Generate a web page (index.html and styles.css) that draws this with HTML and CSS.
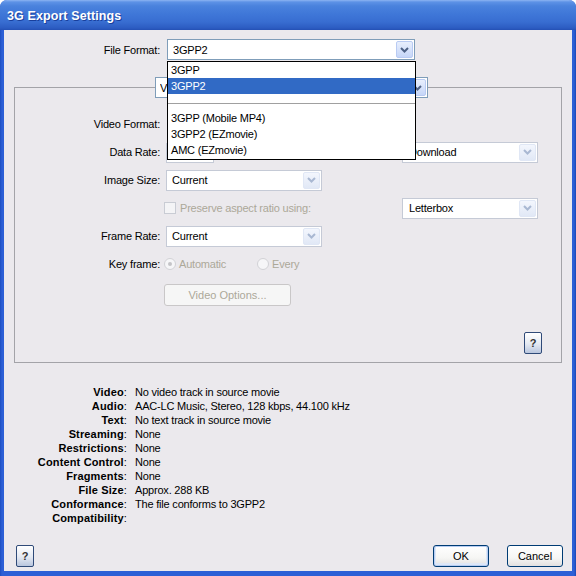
FILE: index.html
```html
<!DOCTYPE html>
<html>
<head>
<meta charset="utf-8">
<title>3G Export Settings</title>
<link rel="stylesheet" href="styles.css">
</head>
<body>
<div class="window">
  <div class="titlebar"><span class="title">3G Export Settings</span></div>
  <div class="client">
    <div class="ff-row">
      <span class="lbl">File Format:</span>
      <div class="combo ff"><span class="val">3GPP2</span><span class="btn"><svg width="9" height="6" viewBox="0 0 9 6"><path d="M1 1 L4.5 4.5 L8 1" fill="none" stroke="#4d6185" stroke-width="2"/></svg></span></div>
    </div>
    <fieldset class="group">
      <legend class="legend">
        <div class="combo tab"><span class="val">Video</span><span class="btn"><svg width="9" height="6" viewBox="0 0 9 6"><path d="M1 1 L4.5 4.5 L8 1" fill="none" stroke="#4d6185" stroke-width="2"/></svg></span></div>
      </legend>
      <div class="row">
        <span class="lbl">Video Format:</span>
        <div class="combo vf"><span class="val">H.263</span><span class="btn"></span></div>
      </div>
      <div class="row">
        <span class="lbl">Data Rate:</span>
        <div class="textbox"></div>
        <div class="combo dim side"><span class="val">Download</span><span class="btn"><svg width="9" height="6" viewBox="0 0 9 6"><path d="M1 1 L4.5 4.5 L8 1" fill="none" stroke="#a9b8d2" stroke-width="2"/></svg></span></div>
      </div>
      <div class="row">
        <span class="lbl">Image Size:</span>
        <div class="combo dim mid"><span class="val">Current</span><span class="btn"><svg width="9" height="6" viewBox="0 0 9 6"><path d="M1 1 L4.5 4.5 L8 1" fill="none" stroke="#a9b8d2" stroke-width="2"/></svg></span></div>
      </div>
      <div class="row">
        <span class="check"></span>
        <span class="disabled ctext">Preserve aspect ratio using:</span>
        <div class="combo dim side"><span class="val">Letterbox</span><span class="btn"><svg width="9" height="6" viewBox="0 0 9 6"><path d="M1 1 L4.5 4.5 L8 1" fill="none" stroke="#a9b8d2" stroke-width="2"/></svg></span></div>
      </div>
      <div class="row">
        <span class="lbl">Frame Rate:</span>
        <div class="combo dim mid"><span class="val">Current</span><span class="btn"><svg width="9" height="6" viewBox="0 0 9 6"><path d="M1 1 L4.5 4.5 L8 1" fill="none" stroke="#a9b8d2" stroke-width="2"/></svg></span></div>
      </div>
      <div class="row">
        <span class="lbl">Key frame:</span>
        <span class="radio on"></span><span class="disabled rtext">Automatic</span>
        <span class="radio second"></span><span class="disabled rtext">Every</span>
      </div>
      <div class="btnrow">
        <button class="pbtn off">Video Options...</button>
      </div>
      <div class="helprow">
        <button class="help">?</button>
      </div>
    </fieldset>
    <div class="info">
      <span class="k">Video<i>:</i></span><span>No video track in source movie</span>
      <span class="k">Audio<i>:</i></span><span>AAC-LC Music, Stereo, 128 kbps, 44.100 kHz</span>
      <span class="k">Text<i>:</i></span><span>No text track in source movie</span>
      <span class="k">Streaming<i>:</i></span><span>None</span>
      <span class="k">Restrictions<i>:</i></span><span>None</span>
      <span class="k">Content Control<i>:</i></span><span>None</span>
      <span class="k">Fragments<i>:</i></span><span>None</span>
      <span class="k">File Size<i>:</i></span><span>Approx. 288 KB</span>
      <span class="k">Conformance<i>:</i></span><span>The file conforms to 3GPP2</span>
      <span class="k">Compatibility<i>:</i></span><span></span>
    </div>
    <div class="bottom">
      <button class="help">?</button>
      <button class="pbtn ok">OK</button>
      <button class="pbtn cancel">Cancel</button>
    </div>
  </div>
  <div class="droplist">
    <div class="item">3GPP</div>
    <div class="item sel">3GPP2</div>
    <div class="sep"></div>
    <div class="item">3GPP (Mobile MP4)</div>
    <div class="item">3GPP2 (EZmovie)</div>
    <div class="item">AMC (EZmovie)</div>
  </div>
</div>
</body>
</html>
```
FILE: styles.css
```css
* { box-sizing: border-box; }
body {
  margin: 0;
  font-family: "Liberation Sans", Arial, sans-serif;
  font-size: 11px;
  letter-spacing: -0.2px;
  color: #000;
  background: #fff;
}
.window {
  position: relative;
  width: 576px;
  height: 576px;
  background: linear-gradient(90deg, #1d4ec0, #2c5fd6 2px, #2c5fd6 calc(100% - 2px), #1a47b4);
  border-radius: 7px 7px 0 0;
  display: flex;
  flex-direction: column;
  overflow: hidden;
}
.titlebar {
  height: 30px;
  flex: none;
  display: flex;
  align-items: center;
  padding: 2px 0 0 7px;
  background: linear-gradient(#8cb4f2 0, #5d92e6 2px, #4a82dd 6px, #3f77d8 14px, #386dd1 22px, #2c5cc2 28px, #2450b4 30px);
}
.title {
  color: #fff;
  font-weight: bold;
  font-size: 12.5px;
  letter-spacing: 0.1px;
  text-shadow: 1px 1px 0 #183f9c;
}
.client {
  flex: 1;
  margin: 0 4px 5px;
  background: #ebe9ed;
  display: flex;
  flex-direction: column;
}
.lbl {
  flex: none;
  text-align: right;
}
.ff-row {
  display: flex;
  align-items: center;
  gap: 7px;
  margin-top: 9px;
  height: 21px;
}
.ff-row .lbl { width: 156px; }
.combo {
  display: flex;
  align-items: center;
  height: 21px;
  background: #fff;
  border: 1px solid #7f9db9;
  padding: 0 1px 0 5px;
  flex: none;
}
.combo .val {
  flex: 1;
  white-space: nowrap;
  overflow: hidden;
}
.combo .btn {
  flex: none;
  width: 17px;
  height: 17px;
  border: 1px solid #b9cbf3;
  border-radius: 2px;
  background: linear-gradient(#e8effd, #c6d6f8);
  display: flex;
  align-items: center;
  justify-content: center;
}
.combo.dim { border-color: #c5cad6; }
.combo.dim .btn {
  background: linear-gradient(#f3f6fd, #e1e8f6);
  border-color: #e0e7f5;
}
.ff { width: 248px; }
.group {
  margin: 17px 10px 0;
  padding: 12px 23px 8px 0;
  border: 1px solid #a3a3a8;
  min-width: 0;
}
.legend {
  padding: 0;
  margin-left: 140px;
}
.tab { width: 273px; padding-left: 4px; }
.row {
  display: flex;
  align-items: center;
  gap: 6px;
  height: 28px;
}
.row .lbl { width: 145px; }
.vf { width: 240px; margin-left: 2px; }
.textbox {
  width: 48px;
  height: 20px;
  margin-top: 2px;
  background: #fff;
  border: 1px solid #c5cad6;
}
.side { width: 136px; margin-left: auto; padding-left: 6px; }
.mid { width: 156px; }
.check {
  width: 12px;
  height: 12px;
  margin-left: 149px;
  border: 1px solid #c9ccd4;
  background: #f4f4f6;
  flex: none;
}
.ctext { margin-left: -2px; }
.disabled { color: #aca899; }
.radio {
  width: 12px;
  height: 12px;
  border-radius: 50%;
  border: 1px solid #d2d2d6;
  background: #f6f6f8;
  flex: none;
  margin-left: -2px;
  display: flex;
  align-items: center;
  justify-content: center;
}
.radio.on::after {
  content: "";
  width: 4px;
  height: 4px;
  border-radius: 50%;
  background: #c4c4c8;
}
.radio.second { margin-left: 25px; }
.rtext { margin-left: -3px; }
.btnrow {
  display: flex;
  margin-top: 6px;
  padding-left: 149px;
}
.pbtn {
  font: inherit;
  height: 22px;
  border: 1px solid #003c74;
  border-radius: 3px;
  background: linear-gradient(#ffffff, #f6f6f4 60%, #e2e0e0);
  color: #000;
  padding: 0;
}
.pbtn.off {
  width: 127px;
  border-color: #c9c7c8;
  background: #f6f6f6;
  color: #aca899;
}
.helprow {
  display: flex;
  justify-content: flex-end;
  margin: 26px -4px 0 0;
}
.help {
  font: inherit;
  font-weight: bold;
  width: 18px;
  height: 22px;
  padding: 0;
  border: 1px solid #2f4a78;
  border-radius: 2px;
  background: linear-gradient(#ffffff, #e4e9f2 55%, #b9c6de);
  color: #333;
}
.info {
  display: grid;
  grid-template-columns: 123px auto;
  column-gap: 8px;
  line-height: 14px;
  margin-top: 22px;
}
.info .k { text-align: right; font-weight: bold; letter-spacing: 0.15px; }
.info .k i { font-style: normal; font-weight: normal; }
.bottom {
  display: flex;
  align-items: center;
  margin-top: 20px;
  padding: 0 9px 0 12px;
}
.ok {
  width: 56px;
  margin-left: auto;
  box-shadow: inset 0 0 0 1px #b7cdf2, inset 0 -1px 0 2px #dde7f7;
}
.cancel { width: 56px; margin-left: 18px; }
.droplist {
  position: absolute;
  left: 167px;
  top: 61px;
  width: 249px;
  height: 99px;
  background: #fff;
  border: 1px solid #000;
}
.item {
  height: 16px;
  line-height: 16px;
  padding-left: 3px;
  white-space: nowrap;
}
.item.sel { background: #316ac5; color: #fff; }
.sep {
  height: 16px;
  display: flex;
  align-items: center;
  padding-top: 2px;
}
.sep::after {
  content: "";
  flex: 1;
  border-top: 1px solid #a0a0a0;
}
```
